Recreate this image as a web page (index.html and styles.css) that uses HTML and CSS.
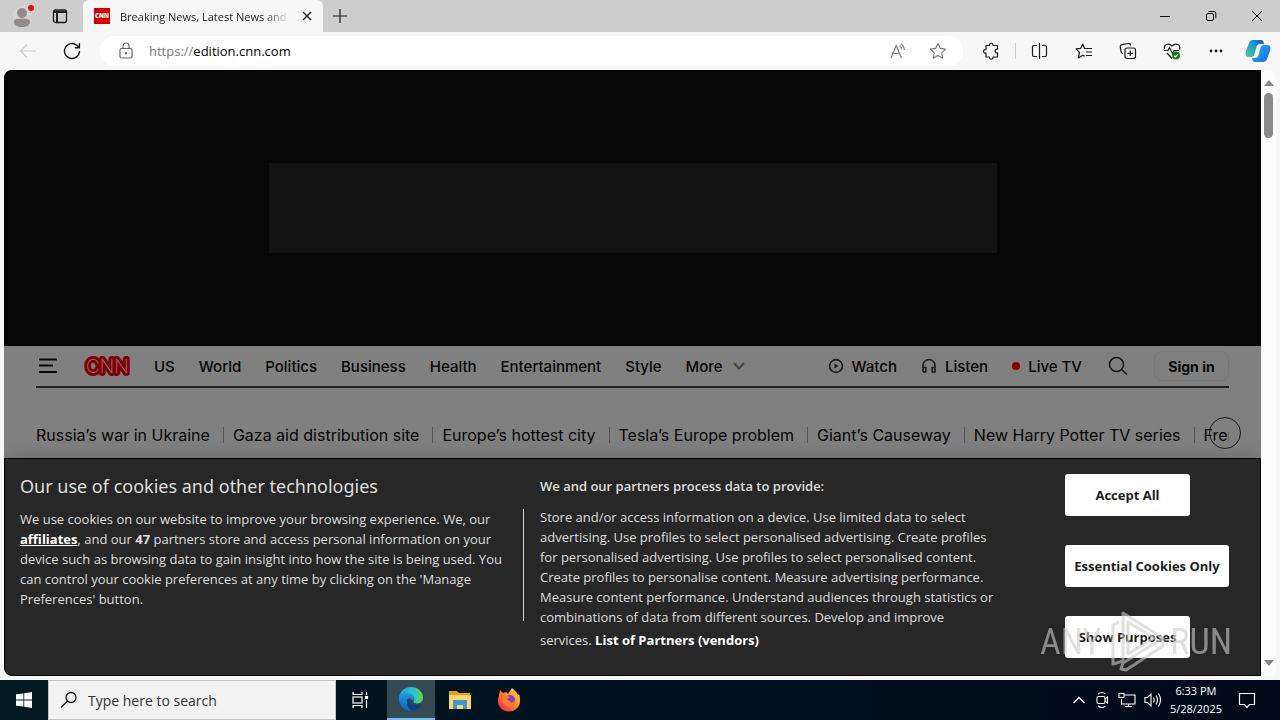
FILE: index.html
```html
<!DOCTYPE html>
<html lang="en">
<head>
    <title>Breaking News, Latest News and Videos</title>
    <meta charset="utf-8">
    <link rel="stylesheet" href="styles.css">
</head>
<body>
<div class="tabbar">
    <button class="profile" aria-label="Profile">
        <svg width="24" height="28" viewBox="0 0 24 28"><circle cx="12" cy="14" r="10" fill="#d6d3d1"/><circle cx="12" cy="11" r="5" fill="#8f8c8a"/><path d="M4 20c0-3 3-3.500 8-3.500s8 .5 8 3.500c0 3-3.500 5-8 5s-8-2-8-5z" fill="#8f8c8a"/><circle cx="21" cy="6" r="3" fill="#e00b1c"/></svg>
    </button>
    <button class="tab-actions" aria-label="Tab actions">
        <svg width="16" height="16" viewBox="0 0 16 16" fill="none" stroke="#1b1b1b" stroke-width="1.300"><rect x="1.500" y="2" width="13" height="12.500" rx="2"/><path d="M1.500 4h13M5 4v10" stroke-width="2"/></svg>
    </button>
    <div class="tab">
        <span class="favicon">CNN</span>
        <span class="tab-title">Breaking News, Latest News and</span>
        <button class="tab-close" aria-label="Close tab">
            <svg width="10" height="10" viewBox="0 0 10 10" stroke="#1b1b1b" stroke-width="1.400"><path d="M1 1l8 8M9 1l-8 8"/></svg>
        </button>
    </div>
    <button class="new-tab" aria-label="New tab">
        <svg width="14" height="14" viewBox="0 0 14 14" stroke="#1b1b1b" stroke-width="1.200"><path d="M7 0v14M0 7h14"/></svg>
    </button>
    <div class="window-buttons">
        <button aria-label="Minimize"><svg width="10" height="10" viewBox="0 0 10 10" stroke="#111"><path d="M0 5.500h10"/></svg></button>
        <button aria-label="Restore"><svg width="12" height="12" viewBox="0 0 12 12" fill="none" stroke="#111"><rect x="1.500" y="3.500" width="7" height="7" rx="1.500"/><path d="M3.500 1.500H9a1.800 1.800 0 0 1 1.800 1.800v5"/></svg></button>
        <button aria-label="Close"><svg width="12" height="12" viewBox="0 0 12 12" stroke="#111"><path d="M1 1l10 10M11 1L1 11"/></svg></button>
    </div>
</div>

<div class="toolbar">
    <button aria-label="Back"><svg width="18" height="16" viewBox="0 0 18 16" fill="none" stroke="#cecece" stroke-width="1.200"><path d="M17 8H1.500M8 1.500L1.500 8 8 14.500"/></svg></button>
    <button aria-label="Refresh"><svg width="18" height="18" viewBox="0 0 18 18" fill="none" stroke="#1b1b1b" stroke-width="1.400"><path d="M16.500 9A7.500 7.500 0 1 1 14 3.400L16.300 5.500M16.400 1v4.700h-4.600"/></svg></button>
    <div class="address">
        <svg class="lock" width="14" height="18" viewBox="0 0 14 18" fill="none" stroke="#666" stroke-width="1.200"><rect x="1" y="6.500" width="12" height="9.500" rx="1.500"/><path d="M4 6.500V4a3 3 0 0 1 6 0v2.500"/><circle cx="7" cy="11.300" r=".6" fill="#666"/></svg>
        <label class="url" for="url"><span class="scheme">https://</span><input id="url" type="text" value="edition.cnn.com"></label>
        <button aria-label="Read aloud">
            <svg width="18" height="18" viewBox="0 0 18 18" fill="none" stroke="#777" stroke-width="1.100"><path d="M2 16L7.200 3.500 12.400 16M4 11.500h6.600M10.500 3.500q2 1.500 2 4M12.500 2q3 2.500 3 6"/></svg>
        </button>
        <button aria-label="Add to favorites">
            <svg width="18" height="18" viewBox="0 0 18 18" fill="none" stroke="#777" stroke-width="1.100" stroke-linejoin="round"><path d="M9 1.500l2.300 4.900 5.300.7-3.900 3.700 1 5.400L9 13.600l-4.700 2.600 1-5.400L1.400 7.100l5.300-.7z"/></svg>
        </button>
    </div>
    <button aria-label="Extensions">
        <svg width="18" height="18" viewBox="0 0 18 18" fill="none" stroke="#1b1b1b" stroke-width="1.200" stroke-linejoin="round"><path d="M4 3.500h3.500c-.5-3 4-3 3.500 0h4.500v3.700c-3.200-.7-3.200 4.300 0 3.600v4.200H11c.5 2.800-4 2.800-3.500 0H4v-4c-3.400.7-3.400-4 0-3.300z"/></svg>
    </button>
    <span class="divider"></span>
    <button aria-label="Split screen">
        <svg width="18" height="18" viewBox="0 0 18 18" fill="none" stroke="#1b1b1b" stroke-width="1.200"><path d="M8.500 1v16M6 3.500H3a1.500 1.500 0 0 0-1.500 1.500v8A1.500 1.500 0 0 0 3 14.500h3M11 3.500h3A1.500 1.500 0 0 1 15.500 5v8a1.500 1.500 0 0 1-1.500 1.500h-3"/></svg>
    </button>
    <button aria-label="Favorites">
        <svg width="18" height="18" viewBox="0 0 18 18" fill="none" stroke="#1b1b1b" stroke-width="1.200" stroke-linejoin="round"><path d="M10.500 6.500H17M11 10h6M11 13.500h6M10.500 6.500H9.600L7.700 2 5.700 6.300l-4.600.5 3.400 3.700-1.200 5.500 4.400-2.800 1.800 1"/></svg>
    </button>
    <button aria-label="Collections">
        <svg width="18" height="18" viewBox="0 0 18 18" fill="none" stroke="#1b1b1b" stroke-width="1.200"><rect x="6" y="6" width="10.500" height="10.500" rx="2"/><path d="M11.300 8.500v5.500M8.500 11.300H14M4 11.500c-1 0-1.500-.5-1.800-1.500L1.300 5.300C1 4 1.600 3 3 2.700l6-1.200c1.500-.2 2.500.5 3 2"/></svg>
    </button>
    <button aria-label="Browser essentials">
        <svg width="18" height="18" viewBox="0 0 18 18" fill="none" stroke="#1b1b1b" stroke-width="1.200"><path d="M1.500 7C.5 3 5 0 9 4c4-4 9-1 7.500 3.500M1 8.500h4l1.500-3 3 6 1.500-3h5M4 11l5 5.500"/><circle cx="13" cy="13.500" r="4" fill="#13800f" stroke="none"/><path d="M11 13.700l1.300 1.200 2.500-2.600" stroke="#fff"/></svg>
    </button>
    <button aria-label="Settings and more">
        <svg width="16" height="4" viewBox="0 0 16 4" fill="#1b1b1b"><circle cx="3" cy="2" r="1.400"/><circle cx="8" cy="2" r="1.400"/><circle cx="13" cy="2" r="1.400"/></svg>
    </button>
    <button class="copilot" aria-label="Copilot">
        <svg width="26" height="24" viewBox="0 0 26 24">
            <defs>
                <linearGradient id="cp1" x1="0" y1="1" x2="1" y2="0"><stop offset="0" stop-color="#58c98c"/><stop offset=".5" stop-color="#1ba5d5"/><stop offset="1" stop-color="#1257b5"/></linearGradient>
                <linearGradient id="cp2" x1="0" y1="0" x2="1" y2="1"><stop offset="0" stop-color="#25b8e8"/><stop offset="1" stop-color="#176ae0"/></linearGradient>
            </defs>
            <path d="M8 1h8c2 0 2.500 1.500 3 4h-4c-2 0-3 1-3.500 3l-2 7c-.5 2-1 3-3 3H4c-3 0-4-2-3-6L4 4c.7-2 2-3 4-3z" fill="url(#cp1)"/>
            <path d="M18 23h-8c-2 0-2.500-1.500-3-4h3c2 0 3-1 3.500-3l2-7c.5-2 1-3 3-3H22c3 0 4 2 3 6l-3 8c-.7 2-2 3-4 3z" fill="url(#cp2)"/>
        </svg>
    </button>
</div>

<div class="window">
    <main class="page">
        <div class="ad"><div class="ad-slot"></div></div>
        <header class="site-header">
            <nav class="nav">
                <button class="menu" aria-label="Menu"><svg width="24" height="18" viewBox="0 0 24 18" stroke="#0a0a0a" stroke-width="1.800"><path d="M3 2.500h18M3 8.500h14M3 15h18"/></svg></button>
                <a class="logo" href="#" aria-label="CNN">
                    <svg width="46" height="24" viewBox="0 0 46 24"><text x="2" y="19">CNN</text><text class="inline" x="2" y="19">CNN</text></svg>
                </a>
                <a href="#">US</a>
                <a href="#">World</a>
                <a href="#">Politics</a>
                <a href="#">Business</a>
                <a href="#">Health</a>
                <a href="#">Entertainment</a>
                <a href="#">Style</a>
                <a class="more" href="#">More <svg width="14" height="10" viewBox="0 0 14 10" fill="none" stroke="#444" stroke-width="2"><path d="M2 2l5 5.500L12 2"/></svg></a>
                <div class="nav-right">
                    <a href="#"><svg width="16" height="16" viewBox="0 0 16 16" fill="none" stroke="#1c1c1c" stroke-width="1.600"><circle cx="8" cy="8" r="6.400"/><path d="M6.500 5.500v5l4-2.500z" fill="#1c1c1c" stroke="none"/></svg>Watch</a>
                    <a href="#"><svg width="16" height="16" viewBox="0 0 16 16" fill="none" stroke="#1c1c1c" stroke-width="1.600"><path d="M2 14V7.500a6 6 0 0 1 12 0V14h-2.800V9.500H14M2 9.500h2.800V14H2"/></svg>Listen</a>
                    <a href="#"><span class="live-dot"></span>Live TV</a>
                    <button class="search" aria-label="Search"><svg width="20" height="20" viewBox="0 0 20 20" fill="none" stroke="#141414" stroke-width="1.500"><circle cx="8.500" cy="8.500" r="7"/><path d="M13.500 13.500l5.500 5"/></svg></button>
                    <button class="sign-in">Sign in</button>
                </div>
            </nav>
            <div class="topics">
                <ul>
                    <li><a href="#">Russia’s war in Ukraine</a></li>
                    <li><a href="#">Gaza aid distribution site</a></li>
                    <li><a href="#">Europe’s hottest city</a></li>
                    <li><a href="#">Tesla’s Europe problem</a></li>
                    <li><a href="#">Giant’s Causeway</a></li>
                    <li><a href="#">New Harry Potter TV series</a></li>
                    <li><a href="#">French</a></li>
                </ul>
                <button class="topics-next" aria-label="Next topics"></button>
            </div>
        </header>
        <section class="cookies">
            <div class="cookies-about">
                <h2>Our use of cookies and other technologies</h2>
                <p>We use cookies on our website to improve your browsing experience. We, our<br>
                    <a href="#">affiliates</a>, and our <b>47</b> partners store and access personal information on your<br>
                    device such as browsing data to gain insight into how the site is being used. You<br>
                    can control your cookie preferences at any time by clicking on the 'Manage<br>
                    Preferences' button.</p>
            </div>
            <div class="cookies-purposes">
                <h3>We and our partners process data to provide:</h3>
                <p>Store and/or access information on a device. Use limited data to select<br>
                    advertising. Use profiles to select personalised advertising. Create profiles<br>
                    for personalised advertising. Use profiles to select personalised content.<br>
                    Create profiles to personalise content. Measure advertising performance.<br>
                    Measure content performance. Understand audiences through statistics or<br>
                    combinations of data from different sources. Develop and improve<br>
                    services. <button class="vendors">List of Partners (vendors)</button></p>
            </div>
            <div class="cookies-actions">
                <button class="accept">Accept All</button>
                <button class="essential">Essential Cookies Only</button>
                <button class="show">Show Purposes</button>
            </div>
        </section>
    </main>
    <div class="scrollbar">
        <svg width="10" height="6" viewBox="0 0 10 6" fill="#858585"><path d="M0 6l5-6 5 6z"/></svg>
        <span class="thumb"></span>
        <svg width="10" height="6" viewBox="0 0 10 6" fill="#858585"><path d="M0 0l5 6 5-6z"/></svg>
    </div>
    <div class="watermark">
        <span>ANY</span>
        <svg width="56" height="64" viewBox="0 0 56 64" fill="none" stroke="#ccc" stroke-width="3" stroke-linejoin="round"><path d="M13 3l40 25-40 25zM9 12L3 15v39l10-3M13 53l-2 6 5 1 37-24v-8M18 12v32l26-16z"/></svg>
        <span>RUN</span>
    </div>
</div>

<div class="taskbar">
    <button class="start" aria-label="Start"><svg width="16" height="16" viewBox="0 0 16 16" fill="#fff"><path d="M0 2.300l7.400-.9v6.200H0zM8.200 1.300L16 0v7.600H8.200zM0 8.400h7.400v6.200L0 13.700zM8.200 8.400H16V16l-7.800-1.300z"/></svg></button>
    <label class="win-search">
        <svg width="18" height="18" viewBox="0 0 18 18" fill="none" stroke="#1b1b1b" stroke-width="1.300"><circle cx="11" cy="6.500" r="5"/><path d="M7.500 10L1 16.500"/></svg>
        <input type="text" placeholder="Type here to search">
    </label>
    <button class="task" aria-label="Task view"><svg width="18" height="18" viewBox="0 0 18 18" fill="none" stroke="#fff" stroke-width="1.200"><path d="M2 1v2.500h9V1M2 17v-2.500h9V17M15.500 1v3M15.500 9v8"/><rect x="2" y="6" width="9" height="6"/><rect x="14.500" y="5.500" width="2" height="2" fill="#fff"/></svg></button>
    <button class="task active" aria-label="Microsoft Edge">
        <svg width="24" height="24" viewBox="0 0 24 24">
            <defs>
                <linearGradient id="ed1" x1="0" y1="0" x2="1" y2="0"><stop offset="0" stop-color="#1ca5de"/><stop offset=".6" stop-color="#2cc3cf"/><stop offset="1" stop-color="#62d94a"/></linearGradient>
                <linearGradient id="ed2" x1="0" y1="0" x2="0" y2="1"><stop offset="0" stop-color="#1b9de2"/><stop offset="1" stop-color="#1261b8"/></linearGradient>
            </defs>
            <path d="M0 12C0 5 5 0 12 0c7 0 12 5 12 10.500 0 4-3 6-6 6-2.500 0-4-1-3.500-2 2-3 0-6.500-4-6.500C5 8 1 9 0 12z" fill="url(#ed1)"/>
            <path d="M0 12c0-4 3-6 7-6 4.500 0 8 2 8 6 0 1-.5 2-1 2.500-.5-2-2-3-3.500-3-2 0-3 2-2.500 4 .7 4 5 6 8 5.500-.5 1.500-3 3-5 3C5 23.500 0 18 0 12z" fill="url(#ed2)"/>
            <path d="M8 15c-.5-2 .5-3.500 2.500-3.500-1 3 1 6.500 6 6.500 2.500 0 4-.5 5-1 1 0 .7.500 0 1.500C19 22 16 23.500 12.500 23.500 9 22 8 18 8 15z" fill="#123f80"/>
        </svg>
    </button>
    <button class="task" aria-label="File Explorer">
        <svg width="22" height="20" viewBox="0 0 22 20"><path d="M0 1h8l2 2h11v4H0z" fill="#e0a01e"/><path d="M0 5h22v14H0z" fill="#fcd667"/><path d="M4 10h14v9h-4v-4H8v4H4z" fill="#3f94d4"/></svg>
    </button>
    <button class="task" aria-label="Firefox">
        <svg width="24" height="24" viewBox="0 0 24 24">
            <defs><linearGradient id="ff" x1="1" y1="0" x2="0" y2="1"><stop offset="0" stop-color="#ffe34a"/><stop offset=".45" stop-color="#ff8a1c"/><stop offset="1" stop-color="#f5156c"/></linearGradient></defs>
            <path d="M2 7l1-5 3 3 3-1 2 2 4-6c2 2 5 4 6 7l1-1c1 3 1 5 1 7 0 6-5 10.500-11 10.500S1 19 1 13c0-2 .3-4 1-6z" fill="url(#ff)"/>
            <circle cx="13" cy="12" r="5" fill="#7b3fd0"/><path d="M5 8c2-1 5-1 8 1l-3 2 5 4 3-3c0 4-3 6-6 6-5 0-8-5-7-10z" fill="#ff7b23"/>
        </svg>
    </button>
    <div class="tray">
        <svg width="14" height="8" viewBox="0 0 14 8" fill="none" stroke="#fff" stroke-width="1.300"><path d="M1.500 7L7 1.500 12.500 7"/></svg>
        <svg width="16" height="18" viewBox="0 0 16 18" fill="none" stroke="#fff" stroke-width="1.100"><path d="M4 3c2.500-2 5-2 7.500 0M4 15c2.500 2 5 2 7.500 0M11 8l2.500-2v6L11 10"/><rect x="3" y="5.500" width="8" height="7" rx="1.500"/></svg>
        <svg width="18" height="16" viewBox="0 0 18 16" fill="none" stroke="#fff" stroke-width="1.100"><path d="M6.500 3H17v9H3.500V7M7 14.500h7M10.500 12v2.500"/><rect x="1" y="1.500" width="5" height="4"/></svg>
        <svg width="18" height="16" viewBox="0 0 18 16" fill="none" stroke="#fff" stroke-width="1.100"><path d="M1 5.500h2.500L7 2v12l-3.500-3.500H1zM9.500 5.500q1.500 2.500 0 5M12 3.500q3 4.500 0 9M14.500 1.500q4 6.500 0 13"/></svg>
        <div class="clock"><span>6:33 PM</span><span>5/28/2025</span></div>
        <svg class="notify" width="18" height="18" viewBox="0 0 18 18" fill="none" stroke="#fff" stroke-width="1.200"><path d="M1.500 2.500h15v11h-5L9 16.500l-2.500-3h-5z"/></svg>
    </div>
</div>
</body>
</html>
```
FILE: styles.css
```css
* {
    box-sizing: border-box;
}

body {
    margin: 0;
    height: 100vh;
    display: flex;
    flex-direction: column;
    overflow: hidden;
    background-color: #f7f7f7;
    font-family: "Open Sans", "Noto Sans", sans-serif;
    font-size: 13px;
    color: #1b1b1b;
}

button {
    display: flex;
    align-items: center;
    justify-content: center;
    padding: 0;
    border: 0;
    background: none;
    font: inherit;
    color: inherit;
}

svg {
    flex-shrink: 0;
}

a {
    color: inherit;
    text-decoration: none;
}

input {
    border: 0;
    padding: 0;
    background: none;
    font: inherit;
    color: inherit;
    outline: 0;
}

/* tabs */

.tabbar {
    display: flex;
    height: 32px;
    flex-shrink: 0;
    background-color: #cdcdcd;
}

.profile {
    width: 44px;
}

.tab-actions {
    width: 32px;
}

.tab {
    display: flex;
    align-items: center;
    width: 240px;
    margin-left: 7px;
    padding: 0 10px 0 11px;
    border-radius: 6px 6px 0 0;
    background-color: #f7f7f7;
}

.favicon {
    width: 16px;
    height: 16px;
    margin-right: 10px;
    background-color: #cc0000;
    color: #fff;
    font-size: 6px;
    font-weight: 800;
    line-height: 16px;
    text-align: center;
}

.tab-title {
    flex: 1;
    overflow: hidden;
    white-space: nowrap;
    font-size: 11px;
    -webkit-mask-image: linear-gradient(90deg, #000 85%, transparent);
    mask-image: linear-gradient(90deg, #000 85%, transparent);
}

.tab-close {
    width: 12px;
    margin-left: 11px;
}

.new-tab {
    width: 34px;
}

.window-buttons {
    display: flex;
    margin-left: auto;
}

.window-buttons button {
    width: 46px;
}

/* toolbar */

.toolbar {
    display: flex;
    align-items: center;
    height: 38px;
    flex-shrink: 0;
    padding: 0 2px 0 6px;
}

.toolbar > button {
    width: 44px;
    height: 30px;
}

.toolbar .copilot {
    width: 40px;
}

.address {
    display: flex;
    align-items: center;
    flex: 1;
    height: 30px;
    margin: 0 6px;
    padding: 0 5px 0 19px;
    border-radius: 15px;
    background-color: #fff;
}

.address button {
    width: 40px;
}

.url {
    display: flex;
    flex: 1;
    margin-left: 16px;
    color: #000;
}

.url input {
    flex: 1;
}

.scheme {
    color: #757575;
}

.divider {
    width: 1px;
    height: 16px;
    margin: 0 2px;
    background-color: #ccc;
}

/* page */

.window {
    position: relative;
    display: flex;
    flex: 1;
    min-height: 0;
    margin: 0 4px 4px;
}

.page {
    position: relative;
    flex: 1;
    min-width: 0;
    overflow: hidden;
    border-radius: 8px 0 0 8px;
    background-color: #808080;
    color: #060606;
}

.ad {
    display: flex;
    justify-content: center;
    padding: 93px 0;
    background-color: #060606;
}

.ad-slot {
    width: 728px;
    height: 90px;
    background-color: #131313;
}

.site-header {
    padding: 0 32px;
    font-family: Inter, "Liberation Sans", sans-serif;
    font-size: 15px;
}

.nav {
    display: flex;
    align-items: center;
    gap: 24px;
    height: 42px;
    border-bottom: 2px solid #222;
    font-weight: 500;
}

.logo svg {
    display: block;
    overflow: visible;
}

.logo text {
    font-size: 19px;
    font-weight: 200;
    fill: #7c0006;
    stroke: #7c0006;
    stroke-width: 6px;
    stroke-linejoin: round;
}

.logo .inline {
    fill: #a07474;
    stroke: none;
}

.more {
    display: flex;
    align-items: center;
    gap: 9px;
}

.nav-right {
    display: flex;
    align-items: center;
    gap: 24px;
    margin-left: auto;
}

.nav-right a {
    display: flex;
    align-items: center;
    gap: 8px;
}

.live-dot {
    width: 8px;
    height: 8px;
    border-radius: 50%;
    background-color: #8c0000;
}

.search {
    width: 24px;
}

.sign-in {
    width: 75px;
    height: 30px;
    border: 1px solid #777;
    border-radius: 8px;
    font-size: 14px;
    font-weight: 700;
}

.topics {
    position: relative;
    padding-top: 35px;
    font-size: 16px;
}

.topics ul {
    display: flex;
    margin: 0;
    padding: 0;
    overflow: hidden;
    list-style: none;
    white-space: nowrap;
    line-height: 24px;
}

.topics li {
    display: flex;
    align-items: center;
}

.topics li + li::before {
    content: "";
    width: 1px;
    height: 16px;
    margin: 0 9px 0 13px;
    background-color: #555;
}

.topics-next {
    position: absolute;
    top: 29px;
    right: -12px;
    width: 32px;
    height: 32px;
    border: 1px solid #1c1c1c;
    border-radius: 50%;
}

/* cookie banner */

.cookies {
    position: absolute;
    left: 0;
    right: 0;
    bottom: 0;
    display: flex;
    height: 218px;
    padding-left: 15px;
    border: 1px solid #000;
    border-radius: 0 0 0 8px;
    background-color: #272727;
    box-shadow: 0 0 18px rgba(0, 0, 0, .2);
    color: #dedede;
    white-space: nowrap;
}

.cookies h2,
.cookies h3,
.cookies p {
    margin: 0;
}

.cookies p {
    line-height: 20px;
}

.cookies-about {
    width: 503px;
    padding-top: 14px;
}

.cookies-about h2 {
    margin-bottom: 10px;
    font-family: "Noto Sans", sans-serif;
    font-size: 18px;
    font-weight: 400;
    line-height: 26px;
}

.cookies-about a {
    color: #fff;
    font-weight: 700;
    text-decoration: underline;
}

.cookies-purposes {
    position: relative;
    flex: 1;
    padding: 14px 0 0 17px;
}

.cookies-purposes::before {
    content: "";
    position: absolute;
    left: 0;
    top: 50px;
    bottom: 54px;
    width: 1px;
    background-color: #d8d8d8;
}

.cookies-purposes h3 {
    margin-bottom: 8px;
    font-size: 13px;
    font-weight: 600;
    line-height: 26px;
}

.vendors {
    display: inline-block;
    line-height: 26px;
    color: #fff;
    font-weight: 700;
}

.cookies-actions {
    display: flex;
    flex-direction: column;
    align-items: flex-start;
    gap: 29px;
    width: 195px;
    padding-top: 15px;
}

.cookies-actions button {
    height: 42px;
    border-radius: 3px;
    background-color: #fff;
    color: #1c1c1c;
    font-weight: 700;
}

.cookies-actions .accept,
.cookies-actions .show {
    width: 125px;
}

.cookies-actions .essential {
    width: 164px;
}

.scrollbar {
    display: flex;
    flex-direction: column;
    align-items: center;
    width: 15px;
    padding: 10px 0;
    border-radius: 0 8px 8px 0;
    background-color: #fcfcfc;
}

.thumb {
    width: 9px;
    height: 45px;
    margin: 7px 0 auto;
    border-radius: 5px;
    background-color: #8b8b8b;
}

.watermark {
    position: absolute;
    right: 44px;
    bottom: 2px;
    display: flex;
    align-items: center;
    gap: 4px;
    opacity: .6;
    color: #ccc;
    font-family: "Roboto Condensed", Roboto, sans-serif;
    font-size: 36px;
    font-weight: 400;
    pointer-events: none;
}

.watermark svg {
    margin-left: 5px;
}

/* taskbar */

.taskbar {
    display: flex;
    height: 40px;
    flex-shrink: 0;
    background: linear-gradient(90deg, #001820, #000a1a);
    color: #fff;
}

.start {
    width: 48px;
}

.win-search {
    display: flex;
    align-items: center;
    gap: 10px;
    width: 288px;
    padding-left: 11px;
    border: 1px solid #c5c5c5;
    background-color: #f2f2f2;
    font-size: 14px;
}

.win-search input {
    flex: 1;
    min-width: 0;
}

.win-search input::placeholder {
    color: #333;
}

.task {
    width: 48px;
    margin-right: 1px;
}

.task.active {
    margin-left: 2px;
    border-bottom: 2px solid #76b9ed;
    background-color: #344a53;
}

.tray {
    display: flex;
    align-items: center;
    gap: 8px;
    margin-left: auto;
    padding-right: 24px;
}

.clock {
    display: flex;
    flex-direction: column;
    align-items: center;
    font-size: 11px;
    line-height: 18px;
}

.notify {
    margin-left: 8px;
}
```
